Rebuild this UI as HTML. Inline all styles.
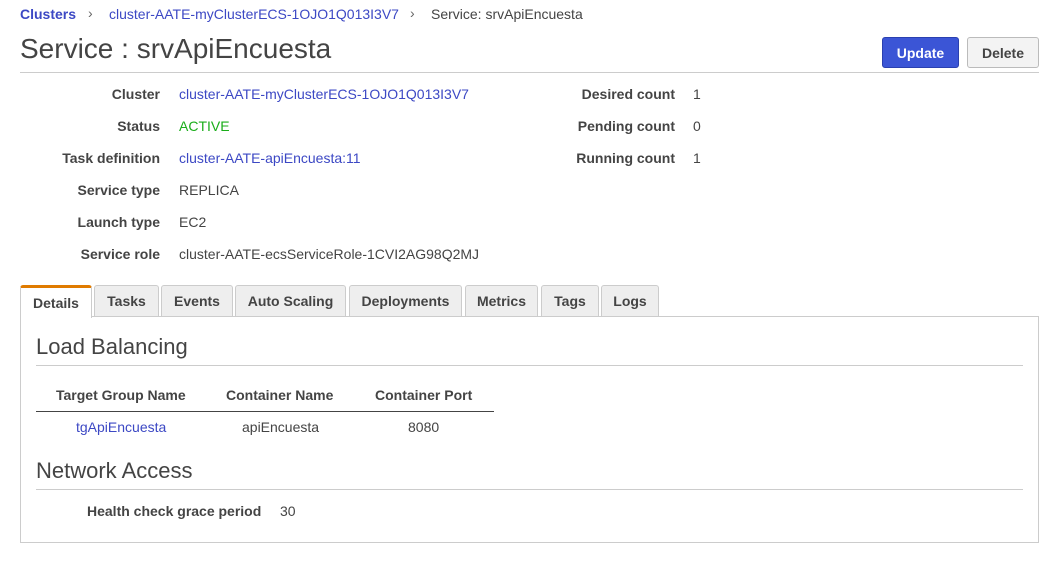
<!DOCTYPE html>
<html><head><meta charset="utf-8"><style>
body{margin:0;width:1045px;height:570px;background:#fff;font-family:"Liberation Sans",Arial,sans-serif;font-size:14px;color:#444;position:relative;overflow:hidden}
.a{position:absolute;white-space:nowrap}
.l{color:#3c48c4}
.b{font-weight:bold}
.r{text-align:right}
.tab{position:absolute;top:285px;height:31px;line-height:31px;background:#eee;border:1px solid #ccc;border-bottom:none;border-radius:3px 3px 0 0;font-weight:bold;text-align:center;box-sizing:border-box}
.hr{position:absolute;height:1px;background:#ccc}
</style></head><body>
<div class="a b l" style="left:20px;top:6px">Clusters</div>
<div class="a" style="left:88px;top:5px;color:#666">›</div>
<div class="a l" style="left:109px;top:6px">cluster-AATE-myClusterECS-1OJO1Q013I3V7</div>
<div class="a" style="left:410px;top:5px;color:#666">›</div>
<div class="a" style="left:431px;top:6px">Service: srvApiEncuesta</div>
<div class="a" style="left:20px;top:33px;font-size:28px;color:#444">Service : srvApiEncuesta</div>
<div class="a b" style="left:882px;top:37px;width:77px;height:31px;line-height:30px;text-align:center;color:#fff;background:#3b55d6;border:1px solid #2a40b0;border-radius:3px;box-sizing:border-box">Update</div>
<div class="a b" style="left:967px;top:37px;width:72px;height:31px;line-height:30px;text-align:center;color:#444;background:#f3f3f3;border:1px solid #bbb;border-radius:3px;box-sizing:border-box">Delete</div>
<div class="hr" style="left:20px;top:72px;width:1019px"></div>

<div class="a b r" style="left:20px;width:140px;top:86px">Cluster</div>
<div class="a b r" style="left:20px;width:140px;top:118px">Status</div>
<div class="a b r" style="left:20px;width:140px;top:150px">Task definition</div>
<div class="a b r" style="left:20px;width:140px;top:182px">Service type</div>
<div class="a b r" style="left:20px;width:140px;top:214px">Launch type</div>
<div class="a b r" style="left:20px;width:140px;top:246px">Service role</div>
<div class="a l" style="left:179px;top:86px">cluster-AATE-myClusterECS-1OJO1Q013I3V7</div>
<div class="a" style="left:179px;top:118px;color:#1aad1a">ACTIVE</div>
<div class="a l" style="left:179px;top:150px">cluster-AATE-apiEncuesta:11</div>
<div class="a" style="left:179px;top:182px">REPLICA</div>
<div class="a" style="left:179px;top:214px">EC2</div>
<div class="a" style="left:179px;top:246px">cluster-AATE-ecsServiceRole-1CVI2AG98Q2MJ</div>
<div class="a b r" style="left:475px;width:200px;top:86px">Desired count</div>
<div class="a b r" style="left:475px;width:200px;top:118px">Pending count</div>
<div class="a b r" style="left:475px;width:200px;top:150px">Running count</div>
<div class="a" style="left:693px;top:86px">1</div>
<div class="a" style="left:693px;top:118px">0</div>
<div class="a" style="left:693px;top:150px">1</div>

<div style="position:absolute;left:20px;top:316px;width:1019px;height:227px;border:1px solid #ccc;box-sizing:border-box"></div>
<div class="tab" style="left:20px;width:72px;background:#fff;border-top:3px solid #e07b00;height:33px;line-height:30px">Details</div>
<div class="tab" style="left:94px;width:65px">Tasks</div>
<div class="tab" style="left:161px;width:72px">Events</div>
<div class="tab" style="left:235px;width:111px">Auto Scaling</div>
<div class="tab" style="left:349px;width:113px">Deployments</div>
<div class="tab" style="left:465px;width:73px">Metrics</div>
<div class="tab" style="left:541px;width:58px">Tags</div>
<div class="tab" style="left:601px;width:58px">Logs</div>

<div class="a" style="left:36px;top:334px;font-size:22px">Load Balancing</div>
<div class="hr" style="left:36px;top:365px;width:987px"></div>
<div class="a b" style="left:56px;top:387px">Target Group Name</div>
<div class="a b" style="left:226px;top:387px">Container Name</div>
<div class="a b" style="left:375px;top:387px">Container Port</div>
<div class="hr" style="left:36px;top:411px;width:458px;background:#444"></div>
<div class="a l" style="left:76px;top:419px">tgApiEncuesta</div>
<div class="a" style="left:242px;top:419px">apiEncuesta</div>
<div class="a" style="left:408px;top:419px">8080</div>
<div class="a" style="left:36px;top:458px;font-size:22px">Network Access</div>
<div class="hr" style="left:36px;top:489px;width:987px"></div>
<div class="a b" style="left:87px;top:503px">Health check grace period</div>
<div class="a" style="left:280px;top:503px">30</div>
</body></html>
